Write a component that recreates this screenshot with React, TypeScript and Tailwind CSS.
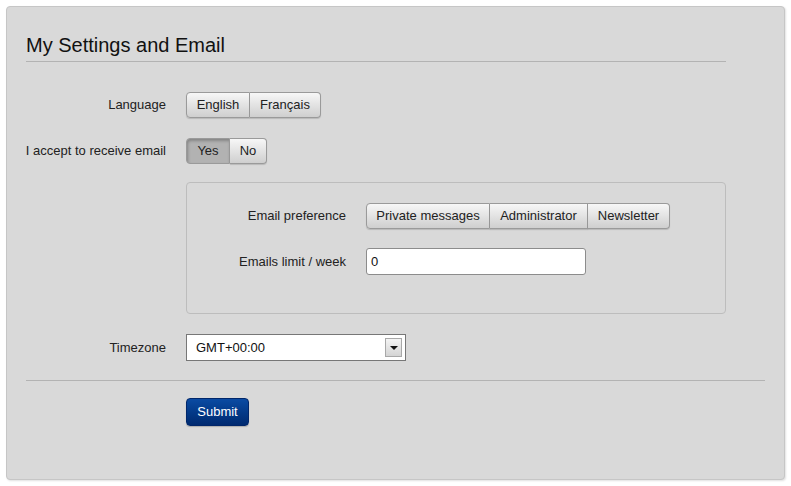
import { useState } from 'react';

const font = { fontFamily: '"Liberation Sans", Arial, sans-serif' };

function SegButton({
  label,
  width,
  active,
  first,
  last,
  onClick,
}: {
  label: string;
  width: string;
  active?: boolean;
  first?: boolean;
  last?: boolean;
  onClick?: () => void;
}) {
  return (
    <button
      onClick={onClick}
      className={
        'h-[26px] border-y border-[#9a9a9a] text-[13px] text-[#222] flex items-center justify-center ' +
        width +
        ' ' +
        (first ? 'border-l rounded-l-[4px] ' : '') +
        (last ? 'border-r rounded-r-[4px] ' : 'border-r ') +
        (active
          ? 'bg-[#b2b2b2] shadow-[inset_1px_2px_3px_rgba(0,0,0,0.25)]'
          : 'bg-gradient-to-b from-[#f7f7f7] to-[#cfcfcf] shadow-[0_1px_1px_rgba(0,0,0,0.15)]')
      }
    >
      {label}
    </button>
  );
}

function Row({ label, children, className = '' }: { label: string; children: React.ReactNode; className?: string }) {
  return (
    <div className={'flex items-center gap-[20px] ' + className}>
      <div className="w-[140px] shrink-0 flex justify-end whitespace-nowrap text-[13px] text-[#222]">{label}</div>
      {children}
    </div>
  );
}

export default function App() {
  const [lang, setLang] = useState<'en' | 'fr' | null>(null);
  const [accept, setAccept] = useState(true);
  const [limit, setLimit] = useState('0');

  return (
    <div className="bg-white p-[6px] w-[791px] h-[486px]" style={font}>
      <div className="h-[474px] w-[779px] bg-[#d9d9d9] border border-[#c6c6c6] rounded-[4px] shadow-[1px_1px_2px_rgba(0,0,0,0.12)] pt-[26px] px-[19px]">
        <h2 className="w-[700px] text-[20px] leading-[24px] text-[#111] pb-[4px] border-b border-[#b3b3b3]">
          My Settings and Email
        </h2>

        <Row label="Language" className="mt-[30px]">
          <div className="flex">
            <SegButton label="English" width="w-[64px]" first active={lang === 'en'} onClick={() => setLang('en')} />
            <SegButton label="Français" width="w-[71px]" last active={lang === 'fr'} onClick={() => setLang('fr')} />
          </div>
        </Row>

        <Row label="I accept to receive email" className="mt-[20px]">
          <div className="flex">
            <SegButton label="Yes" width="w-[44px]" first active={accept} onClick={() => setAccept(true)} />
            <SegButton label="No" width="w-[37px]" last active={!accept} onClick={() => setAccept(false)} />
          </div>
        </Row>

        <div className="ml-[160px] mt-[18px] w-[540px] h-[132px] border border-[#bdbdbd] rounded-[4px] pt-[20px] pl-[19px]">
          <Row label="Email preference">
            <div className="flex">
              <SegButton label="Private messages" width="w-[124px]" first />
              <SegButton label="Administrator" width="w-[98px]" />
              <SegButton label="Newsletter" width="w-[82px]" last />
            </div>
          </Row>
          <Row label="Emails limit / week" className="mt-[19px]">
            <input
              value={limit}
              onChange={(e) => setLimit(e.target.value)}
              className="w-[220px] h-[27px] bg-white border border-[#8c8c8c] rounded-[3px] px-[4px] text-[13px] text-[#111] outline-none"
            />
          </Row>
        </div>

        <Row label="Timezone" className="mt-[20px]">
          <div className="w-[220px] h-[27px] bg-white border border-[#777] flex items-center justify-between pl-[9px] pr-[3px] text-[13px] text-[#111]">
            <span>GMT+00:00</span>
            <span className="w-[17px] h-[19px] border border-[#a8a8a8] bg-gradient-to-b from-[#f4f4f4] to-[#d4d4d4] flex items-center justify-center">
              <span className="w-0 h-0 border-l-[4px] border-r-[4px] border-t-[4px] border-l-transparent border-r-transparent border-t-[#111]" />
            </span>
          </div>
        </Row>

        <div className="mt-[19px] border-t border-[#b3b3b3] w-[739px]" />

        <div className="ml-[160px] mt-[17px]">
          <button className="w-[63px] h-[28px] rounded-[4px] border border-[#00266a] bg-gradient-to-b from-[#0b4ba3] to-[#002a70] text-white text-[13px] shadow-[0_1px_1px_rgba(0,0,0,0.2)]">
            Submit
          </button>
        </div>
      </div>
    </div>
  );
}
